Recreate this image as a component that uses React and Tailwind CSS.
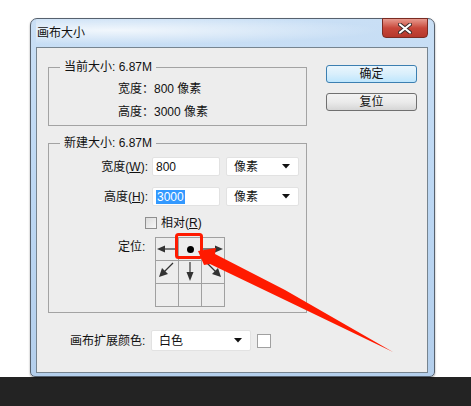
const FONT = "font-['Liberation_Sans','Noto_Sans_CJK_SC',sans-serif]";

function Group({ title, className, children }) {
  return (
    <div className={`relative border border-[#a3a3a3] ${className}`}>
      <span className="absolute -top-[9px] left-[11px] bg-[#ededed] px-[4px] leading-[16px] text-[#111]">
        {title}
      </span>
      {children}
    </div>
  );
}

function Select({ value, className }) {
  return (
    <div className={`flex items-center justify-between bg-white border border-[#e2e2e2] rounded-[2px] pl-[7px] pr-[8px] ${className}`}>
      <span>{value}</span>
      <svg width="8" height="5" viewBox="0 0 8 5">
        <path d="M0 0H8L4 4.5Z" fill="#111" />
      </svg>
    </div>
  );
}

function Cell({ children }) {
  return (
    <div className="w-[23px] h-[23px] border-r border-b border-[#a0a0a0] flex items-center justify-center">
      {children}
    </div>
  );
}

const ARROW = "#333";

function CellArrow({ d, head }) {
  return (
    <svg width="22" height="22" viewBox="0 0 22 22">
      <path d={d} stroke={ARROW} strokeWidth="1.2" fill="none" />
      <path d={head} fill={ARROW} />
    </svg>
  );
}

export default function App() {
  return (
    <div className={`relative w-[471px] h-[406px] bg-white text-[12px] text-[#111] ${FONT}`}>
      <div className="h-[377px] pt-[18px] pl-[30px]">
        <div className="relative w-[405px] h-[359px] flex flex-col border border-[#56616e] rounded-t-[7px] rounded-b-[5px] bg-gradient-to-b from-[#c9dff5] via-[#bcd7f3] to-[#b4cfec] pl-[5px] pr-[6px] pb-[3px] shadow-[0_1px_2px_rgba(0,0,0,0.4)]">
          <div className="h-[28px] flex items-center pl-[1px] bg-[radial-gradient(ellipse_at_20%_40%,rgba(255,255,255,0.75),rgba(255,255,255,0)_60%)]">
            <span className="leading-none mt-[-1px]">画布大小</span>
          </div>
          <div className="absolute -top-[1px] right-[6px] w-[46px] h-[20px] rounded-b-[4px] border border-[#7a2b22] bg-gradient-to-b from-[#e6998e] via-[#c8473a] to-[#b5372b] flex items-center justify-center">
            <svg width="14" height="11" viewBox="0 0 14 11">
              <path d="M2 1.5L12 9.5M12 1.5L2 9.5" stroke="#3b2a2a" strokeWidth="4" strokeLinecap="round" />
              <path d="M2 1.5L12 9.5M12 1.5L2 9.5" stroke="#ffffff" strokeWidth="2.2" strokeLinecap="round" />
            </svg>
          </div>

          <div className="flex-1 border border-[#76848f] bg-[#ededed] flex flex-col">
            <div className="flex">
              <div className="ml-[11px] w-[259px] flex flex-col">
                <Group title="当前大小: 6.87M" className="mt-[19px] h-[59px] pt-[9px] pl-[69px]">
                  <div className="h-[23px] flex items-center">宽度：800 像素</div>
                  <div className="h-[23px] flex items-center">高度：3000 像素</div>
                </Group>

                <Group title="新建大小: 6.87M" className="mt-[17px] h-[170px] pt-[13px]">
                  <div className="flex items-center h-[19px]">
                    <span className="w-[99px] text-right">
                      宽度(<span className="underline">W</span>):
                    </span>
                    <div className="ml-[4px] w-[68px] h-[19px] bg-white border border-[#e2e2e2] rounded-[2px] pl-[3px] flex items-center">
                      800
                    </div>
                    <Select value="像素" className="ml-[6px] w-[73px] h-[19px]" />
                  </div>
                  <div className="flex items-center h-[19px] mt-[11px]">
                    <span className="w-[99px] text-right">
                      高度(<span className="underline">H</span>):
                    </span>
                    <div className="ml-[4px] w-[68px] h-[19px] bg-white border border-[#e2e2e2] rounded-[2px] pl-[3px] flex items-center">
                      <span className="bg-[#3399ff] text-white px-[1px] leading-[14px]">3000</span>
                    </div>
                    <Select value="像素" className="ml-[6px] w-[73px] h-[19px]" />
                  </div>
                  <div className="flex items-center h-[13px] mt-[10px] pl-[96px]">
                    <div className="w-[12px] h-[12px] border border-[#8f8f8f] bg-gradient-to-br from-[#dcdcdc] to-[#f7f7f7]" />
                    <span className="ml-[4px]">
                      相对(<span className="underline">R</span>)
                    </span>
                  </div>
                  <div className="flex items-start mt-[8px] pl-[69px]">
                    <span className="w-[37px] mt-[1px]">定位:</span>
                    <div className="grid grid-cols-3 border-l border-t border-[#a0a0a0] w-[70px]">
                      <Cell>
                        <CellArrow d="M8 11H22" head="M1 11L9 7.5V14.5Z" />
                      </Cell>
                      <Cell>
                        <div className="w-[7px] h-[7px] rounded-full bg-black" />
                      </Cell>
                      <Cell>
                        <CellArrow d="M0 11H13" head="M21 11L13 7.5V14.5Z" />
                      </Cell>
                      <Cell>
                        <CellArrow d="M17 2L8 11" head="M3 16L6 7L12 13Z" />
                      </Cell>
                      <Cell>
                        <CellArrow d="M11 1V12" head="M11 20L7.5 11H14.5Z" />
                      </Cell>
                      <Cell>
                        <CellArrow d="M5 2L14 11" head="M19 16L10 13L16 7Z" />
                      </Cell>
                      <Cell />
                      <Cell />
                      <Cell />
                    </div>
                  </div>
                </Group>
              </div>

              <div className="ml-[19px] mt-[17px] flex flex-col gap-[10px]">
                <div className="w-[91px] h-[18px] rounded-[3px] border border-[#3c7fb1] bg-gradient-to-b from-[#eaf6fd] via-[#d9effc] to-[#bee6fd] flex items-center justify-center leading-none">
                  确定
                </div>
                <div className="w-[91px] h-[18px] rounded-[3px] border border-[#707070] bg-gradient-to-b from-[#f2f2f2] via-[#ebebeb] to-[#d6d6d6] flex items-center justify-center leading-none">
                  复位
                </div>
              </div>
            </div>

            <div className="flex items-center mt-[17px] pl-[33px]">
              <span className="w-[81px]">画布扩展颜色:</span>
              <Select value="白色" className="w-[100px] h-[21px]" />
              <div className="ml-[6px] w-[14px] h-[14px] border border-[#a0a0a0] bg-white" />
            </div>
          </div>
        </div>
      </div>
      <div className="h-[29px] bg-[#232323]" />

      <svg className="absolute left-0 top-0 pointer-events-none" width="471" height="406" viewBox="0 0 471 406">
        <rect x="176.5" y="234.5" width="25" height="23" rx="2" fill="none" stroke="#ff1a00" strokeWidth="3" />
        <polygon
          points="198,251 216,248 215,254 285,290 393,352 285,300 210,264 204,265"
          fill="#ff1a00"
        />
      </svg>
    </div>
  );
}
